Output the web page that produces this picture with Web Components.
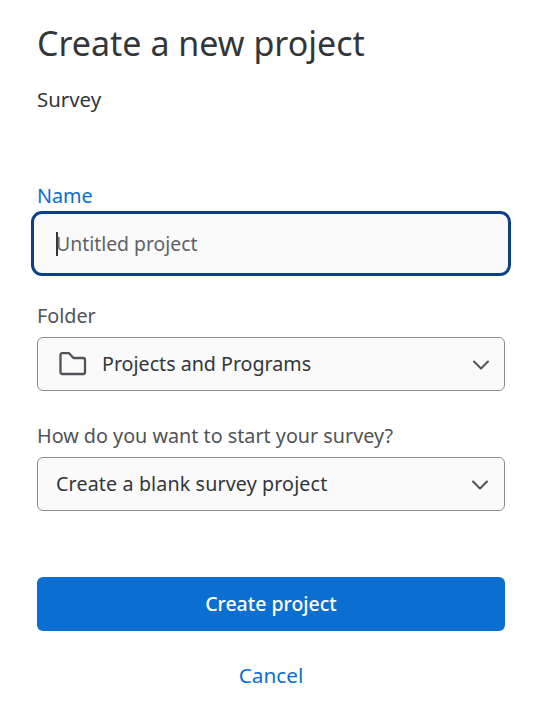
<!DOCTYPE html>
<html lang="en">
<head>
<meta charset="utf-8">
<title>Create a new project</title>
<style>
  html, body { margin: 0; background: #fff; }
  body { font-family: "Noto Sans", sans-serif; }
</style>
</head>
<body>
<project-form>
  <form-field label="Name" active>
    <name-input placeholder="Untitled project"></name-input>
  </form-field>
  <form-field label="Folder">
    <select-box value="Projects and Programs" folder></select-box>
  </form-field>
  <form-field label="How do you want to start your survey?">
    <select-box value="Create a blank survey project" style="--value-spacing: .14px"></select-box>
  </form-field>
</project-form>

<script>
class ProjectForm extends HTMLElement {
  constructor() {
    super();
    this.attachShadow({ mode: 'open' });
  }

  connectedCallback() {
    this.shadowRoot.innerHTML = `
      <style>
        :host {
          display: block;
          box-sizing: border-box;
          width: 542px;
          height: 711px;
          padding: 19px 37px 0;
          color: #32363a;
          overflow: hidden;
        }
        h1 {
          margin: 0;
          font-size: 34px;
          line-height: 48px;
          font-weight: 400;
        }
        .sub {
          margin-top: 19px;
          font-size: 20.400px;
          line-height: 26px;
        }
        .fields {
          display: flex;
          flex-direction: column;
          gap: 32px;
          margin-top: 71px;
        }
        .actions {
          display: flex;
          flex-direction: column;
          margin-top: 66px;
        }
        button {
          border: 0;
          font: inherit;
          cursor: pointer;
        }
        .primary {
          height: 54px;
          padding: 0 0 2px;
          border-radius: 6px;
          background: #0b6ed1;
          color: #fff;
          font-size: 19.500px;
          font-weight: 500;
        }
        .link {
          margin-top: 30px;
          background: none;
          color: #0b6ed1;
          font-size: 20.800px;
          line-height: 28px;
          padding: 0;
        }
      </style>
      <h1>Create a new project</h1>
      <div class="sub">Survey</div>
      <div class="fields"><slot></slot></div>
      <div class="actions">
        <button class="primary" type="button">Create project</button>
        <button class="link" type="button">Cancel</button>
      </div>
    `;
  }
}

class FormField extends HTMLElement {
  constructor() {
    super();
    this.attachShadow({ mode: 'open' });
  }

  connectedCallback() {
    const active = this.hasAttribute('active');
    this.shadowRoot.innerHTML = `
      <style>
        :host {
          display: block;
        }
        label {
          display: block;
          font-size: 19.750px;
          line-height: 26px;
          margin-bottom: 8px;
          color: ${active ? '#0b6ed1' : '#4f5357'};
        }
      </style>
      <label>${this.getAttribute('label')}</label>
      <slot></slot>
    `;
  }
}

class NameInput extends HTMLElement {
  constructor() {
    super();
    this.attachShadow({ mode: 'open' });
  }

  connectedCallback() {
    this.shadowRoot.innerHTML = `
      <style>
        :host {
          display: block;
          margin: -6px -6px -5px;
        }
        .box {
          box-sizing: border-box;
          height: 65px;
          display: flex;
          align-items: center;
          padding-left: 22px;
          border: 3px solid #0a3f8a;
          border-radius: 11px;
          background: #fafafa;
          color: #5f6368;
          font-size: 19.400px;
        }
        .caret {
          width: 2px;
          height: 24px;
          margin-right: -2px;
          background: #32363a;
        }
      </style>
      <div class="box"><span class="caret"></span><span>${this.getAttribute('placeholder')}</span></div>
    `;
  }
}

class SelectBox extends HTMLElement {
  constructor() {
    super();
    this.attachShadow({ mode: 'open' });
  }

  connectedCallback() {
    const hasFolder = this.hasAttribute('folder');
    const folder = hasFolder ? `
      <svg class="folder" width="28" height="24" viewBox="0 0 28 24" fill="none" stroke="#4f5357" stroke-width="2.300" stroke-linejoin="round">
        <path d="M1.500 3a1.800 1.800 0 0 1 1.800-1.800h6.700l4.500 4.800h9.700a1.800 1.800 0 0 1 1.800 1.800v12.400a1.800 1.800 0 0 1-1.800 1.800H3.300a1.800 1.800 0 0 1-1.800-1.800z"/>
      </svg>` : '';
    this.shadowRoot.innerHTML = `
      <style>
        :host {
          display: block;
        }
        .box {
          box-sizing: border-box;
          height: 54px;
          display: flex;
          align-items: center;
          gap: 15px;
          padding: 0 15px 0 18px;
          border: 1px solid #8c8c8c;
          border-radius: 6px;
          background: #fafafa;
          color: #32363a;
          font-size: 19.650px;
        }
        .folder { flex: none; margin-left: 3px; }
        .value { flex: 1; padding-bottom: 2px; letter-spacing: var(--value-spacing, 0); }
        .chev { flex: none; margin-right: ${hasFolder ? '-1px' : '0'}; }
      </style>
      <div class="box">
        ${folder}
        <span class="value">${this.getAttribute('value')}</span>
        <svg class="chev" width="18" height="12" viewBox="0 0 18 12" fill="none" stroke="#4f5357" stroke-width="2" stroke-linecap="round" stroke-linejoin="round">
          <path d="M2 3.500l7 7 7-7"/>
        </svg>
      </div>
    `;
  }
}

customElements.define('project-form', ProjectForm);
customElements.define('form-field', FormField);
customElements.define('name-input', NameInput);
customElements.define('select-box', SelectBox);
</script>
</body>
</html>
